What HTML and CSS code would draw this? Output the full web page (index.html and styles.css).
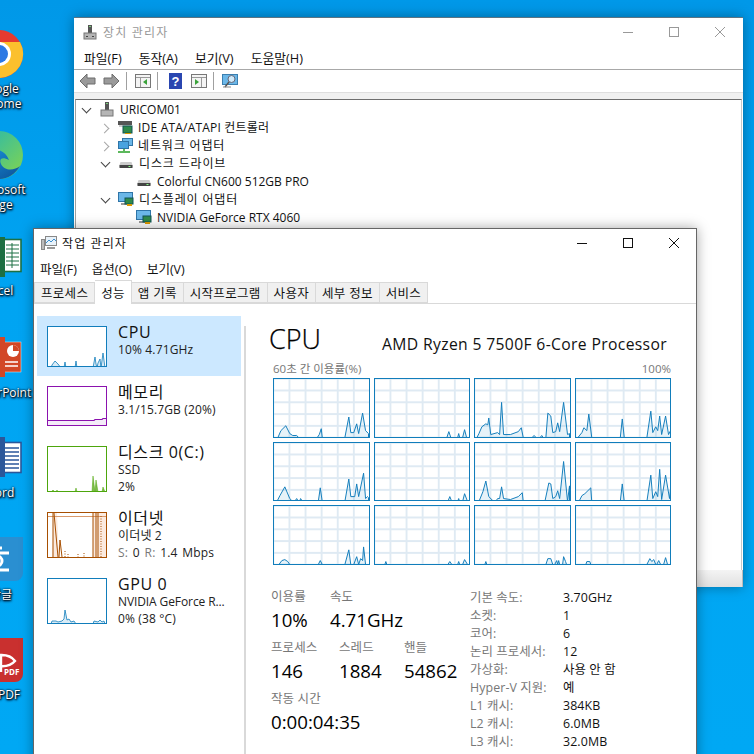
FILE: index.html
```html
<!DOCTYPE html>
<html lang="ko">
<head>
<meta charset="utf-8">
<title>작업 관리자</title>
<link rel="stylesheet" href="styles.css">
</head>
<body>
<main class="desktop">
  <div class="desk-icon di-chrome">
    <svg class="di-art" width="52" height="50" viewBox="0 0 52 50"><circle cx="26" cy="25" r="24" fill="#e53a2f"/><path d="M26 25 L5 37 A24 24 0 0 0 26 49 Z" fill="#2ea44f"/><path d="M26 25 L26 49 A24 24 0 0 0 47 13 L26 13 Z" fill="#fbc02d"/><circle cx="26" cy="25" r="12" fill="#fff"/><circle cx="26" cy="25" r="9" fill="#2b78e4"/></svg>
    <span class="di-label">Google<br>Chrome</span>
  </div>
  <div class="desk-icon di-edge">
    <svg class="di-art" width="52" height="50" viewBox="0 0 52 50"><defs><linearGradient id="edgeg" x1="0" y1="0" x2="1" y2="1"><stop offset="0" stop-color="#1fb5b8"/><stop offset="1" stop-color="#86d64a"/></linearGradient><linearGradient id="edgeb" x1="0" y1="0" x2="1" y2="1"><stop offset="0" stop-color="#1a9be0"/><stop offset="1" stop-color="#0c4f98"/></linearGradient></defs><circle cx="26" cy="25" r="24" fill="url(#edgeg)"/><path d="M2 25 C8 18 30 14 36 30 C28 26 26 30 28 34 C32 42 42 40 47 36 C42 45 34 49 26 49 C12 49 2 38 2 25 Z" fill="url(#edgeb)"/></svg>
    <span class="di-label">Microsoft<br>Edge</span>
  </div>
  <div class="desk-icon di-excel">
    <svg class="di-art" width="52" height="42" viewBox="0 0 52 42"><rect x="30" y="2.500" width="18" height="32" fill="#fff" stroke="#1d7044" stroke-width="1.600"/><path d="M33 8h13M33 12h13M33 16h13M33 20h13M33 24h13M33 28h13M39 6v25" stroke="#1d7044" fill="none"/><rect x="0" y="0" width="32" height="40" fill="#1d6f42"/></svg>
    <span class="di-label">Excel</span>
  </div>
  <div class="desk-icon di-ppt">
    <svg class="di-art" width="52" height="42" viewBox="0 0 52 42"><rect x="30" y="5" width="18" height="30" fill="#d24726" stroke="#e9e9e9" stroke-width=".5"/><circle cx="40" cy="14" r="6" fill="#fff"/><path d="M40 14v-6a6 6 0 0 1 6 6z" fill="#d24726"/><path d="M32 25h13M32 29h13" stroke="#fff" stroke-width="1.500"/><rect x="0" y="0" width="32" height="40" fill="#d24726"/></svg>
    <span class="di-label">PowerPoint</span>
  </div>
  <div class="desk-icon di-word">
    <svg class="di-art" width="52" height="42" viewBox="0 0 52 42"><rect x="30" y="5.500" width="18" height="30" fill="#fff" stroke="#2b579a" stroke-width="1.600"/><path d="M32 11h14M32 15h14M32 19h14M32 23h14M32 27h14M32 31h14" stroke="#2b579a" stroke-width="1.400"/><rect x="0" y="0" width="32" height="40" fill="#2b579a"/></svg>
    <span class="di-label">Word</span>
  </div>
  <div class="desk-icon di-hwp">
    <svg class="di-art" width="52" height="44" viewBox="0 0 52 44"><path d="M0 0H52V36a8 8 0 0 1-8 8H0Z" fill="#2a8fd1"/><path d="M22 11h9M14 16h24M26 29v4M14 33h24" stroke="#fff" stroke-width="3" fill="none"/><circle cx="26" cy="24" r="5" fill="none" stroke="#fff" stroke-width="3"/></svg>
    <span class="di-label">한글</span>
  </div>
  <div class="desk-icon di-pdf">
    <svg class="di-art" width="52" height="44" viewBox="0 0 52 44"><path d="M0 0H52V36a8 8 0 0 1-8 8H0Z" fill="#c9302f"/><path d="M16 23 C24 15 38 15 44 23 C38 30 26 30 16 23 M30 16 V34" stroke="#fff" stroke-width="2.400" fill="none"/></svg>
    <span class="di-pdf-tag">PDF</span>
    <span class="di-label">PDF</span>
  </div>

  <section class="window devmgr">
    <header class="dm-title">
      <svg class="ic" width="14" height="16" viewBox="0 0 14 16"><rect x="5" y="1" width="4" height="8" fill="#555"/><rect x="6" y="2" width="2" height="1" fill="#7c7"/><rect x="1" y="9" width="12" height="6" fill="#b5b5b5" stroke="#777"/><rect x="3" y="12" width="2" height="1" fill="#444"/><rect x="9" y="12" width="2" height="1" fill="#444"/></svg>
      <span class="dm-title-text">장치 관리자</span>
      <div class="caption dim">
        <svg width="12" height="12" viewBox="0 0 12 12"><path d="M1 6.500h10" stroke="currentColor"/></svg>
        <svg width="12" height="12" viewBox="0 0 12 12"><rect x="1.500" y="1.500" width="9" height="9" fill="none" stroke="currentColor"/></svg>
        <svg width="12" height="12" viewBox="0 0 12 12"><path d="M1 1l10 10M11 1L1 11" stroke="currentColor" fill="none"/></svg>
      </div>
    </header>
    <nav class="dm-menu"><span>파일(F)</span><span>동작(A)</span><span>보기(V)</span><span>도움말(H)</span></nav>
    <div class="dm-tools">
      <svg class="tool-back" width="17" height="16" viewBox="0 0 17 16"><path d="M1 8l7-7v4h8v6H8v4z" fill="#9a9a9a" stroke="#6c6c6c"/></svg>
      <svg width="17" height="16" viewBox="0 0 17 16"><path d="M16 8L9 1v4H1v6h8v4z" fill="#9a9a9a" stroke="#6c6c6c"/></svg>
      <i class="tsep"></i>
      <svg width="16" height="14" viewBox="0 0 16 14"><rect x=".5" y=".5" width="15" height="13" fill="#f4f4f4" stroke="#777"/><path d="M1 3.500h14M5.500 4v9" stroke="#999"/><path d="M12 5v6L8 8z" fill="#3aa23a"/></svg>
      <i class="tsep"></i>
      <svg class="tool-help" width="13" height="16" viewBox="0 0 13 16"><rect width="13" height="16" fill="#2a46b0"/><text x="6.500" y="13" class="help-q">?</text></svg>
      <svg width="16" height="14" viewBox="0 0 16 14"><rect x=".5" y=".5" width="15" height="13" fill="#f4f4f4" stroke="#777"/><path d="M1 3.500h14M10.500 4v9" stroke="#999"/><path d="M4 5v6l4-3z" fill="#3aa23a"/></svg>
      <i class="tsep"></i>
      <svg width="16" height="16" viewBox="0 0 16 16"><rect x=".5" y="1.500" width="15" height="10" fill="#6bb7e8" stroke="#3b7fb0"/><circle cx="9.500" cy="6" r="3.500" fill="#cfeafa" stroke="#667"/><path d="M7 9l-4 5" stroke="#555" stroke-width="1.500"/><path d="M1 14h8" stroke="#888"/></svg>
    </div>
    <div class="dm-strip"></div>
    <div class="dm-tree">
      <div class="row root"><span class="chev down"></span><svg width="14" height="16" viewBox="0 0 14 16"><rect x="5" y="1" width="4" height="8" fill="#555"/><rect x="6" y="2" width="2" height="1" fill="#7c7"/><rect x="1" y="9" width="12" height="6" fill="#b5b5b5" stroke="#777"/></svg><span>URICOM01</span></div>
      <div class="row l1"><span class="chev"></span><svg width="15" height="14" viewBox="0 0 15 14"><rect y="1" width="14" height="4" fill="#555"/><rect x="1" y="5" width="12" height="2" fill="#ccc"/><rect x="5" y="6" width="9" height="7" fill="#2f8a4a" stroke="#155"/><rect x="7" y="13" width="6" height="1" fill="#d90"/></svg><span class="mix">IDE ATA/ATAPI 컨트롤러</span></div>
      <div class="row l1"><span class="chev"></span><svg width="15" height="15" viewBox="0 0 15 15"><rect x="4.500" y=".5" width="10" height="7" fill="#6bb7e8" stroke="#2f75a8"/><rect x=".5" y="3.500" width="10" height="7" fill="#49a3df" stroke="#2f75a8"/><path d="M0 14h12M6 11v3" stroke="#5cb85c" stroke-width="2"/></svg><span class="kr">네트워크 어댑터</span></div>
      <div class="row l1"><span class="chev down"></span><svg width="16" height="14" viewBox="0 0 15 14"><path d="M2 6h11l1 3v2H1V9z" fill="#ccc"/><rect x="1" y="9" width="13" height="3" fill="#444"/><rect x="10" y="10" width="2" height="1" fill="#8f8"/></svg><span class="kr">디스크 드라이브</span></div>
      <div class="row l2"><svg width="16" height="14" viewBox="0 0 15 14"><path d="M2 6h11l1 3v2H1V9z" fill="#ccc"/><rect x="1" y="9" width="13" height="3" fill="#444"/><rect x="10" y="10" width="2" height="1" fill="#8f8"/></svg><span>Colorful CN600 512GB PRO</span></div>
      <div class="row l1"><span class="chev down"></span><svg width="16" height="15" viewBox="0 0 16 15"><rect x=".5" y=".5" width="14" height="9" fill="#6bb7e8" stroke="#2f75a8"/><path d="M3 12h6" stroke="#999" stroke-width="2"/><rect x="7" y="6" width="8" height="6" fill="#2f8a4a" stroke="#155"/><rect x="9" y="12" width="5" height="2" fill="#d90"/></svg><span class="kr">디스플레이 어댑터</span></div>
      <div class="row l2"><svg width="16" height="15" viewBox="0 0 16 15"><rect x=".5" y=".5" width="14" height="9" fill="#6bb7e8" stroke="#2f75a8"/><path d="M3 12h6" stroke="#999" stroke-width="2"/><rect x="7" y="6" width="8" height="6" fill="#2f8a4a" stroke="#155"/><rect x="9" y="12" width="5" height="2" fill="#d90"/></svg><span>NVIDIA GeForce RTX 4060</span></div>
    </div>
    <div class="dm-status"></div>
  </section>

  <section class="window taskmgr">
    <header class="tm-title">
      <svg width="16" height="16" viewBox="0 0 16 16"><rect x="4.500" y="1.500" width="11" height="9" fill="#e8f2fa" stroke="#888"/><path d="M5 8l3-3 2 2 3-3 2 2" stroke="#3a8fd0" fill="none"/><rect x=".5" y="4.500" width="3" height="10" fill="#bbb" stroke="#888"/><path d="M6 13h8" stroke="#999" stroke-width="2"/></svg>
      <span class="tm-title-text">작업 관리자</span>
      <div class="caption">
        <svg width="12" height="12" viewBox="0 0 12 12"><path d="M1 6.500h10" stroke="currentColor"/></svg>
        <svg width="12" height="12" viewBox="0 0 12 12"><rect x="1.500" y="1.500" width="9" height="9" fill="none" stroke="currentColor"/></svg>
        <svg width="12" height="12" viewBox="0 0 12 12"><path d="M1 1l10 10M11 1L1 11" stroke="currentColor" fill="none"/></svg>
      </div>
    </header>
    <nav class="tm-menu"><span>파일(F)</span><span>옵션(O)</span><span>보기(V)</span></nav>
    <div class="tabs">
      <span class="tab">프로세스</span><span class="tab active">성능</span><span class="tab">앱 기록</span><span class="tab">시작프로그램</span><span class="tab">사용자</span><span class="tab">세부 정보</span><span class="tab">서비스</span>
    </div>
    <div class="tm-body">
      <aside class="side">
        <div class="res selected">
          <svg class="thumb cpu" viewBox="0 0 58 39" preserveAspectRatio="none"><path class="spark-fill" d="M3 41 L4 38 L7 34 L10 37 L13 41 Z M16 41 L17 35 L18 41 Z M27 41 L28 34 L29 41 Z M45 41 L47 30 L48 37 L49 41 Z M49 41 L50 36 L52 32 L53 41 Z M53 41 L55 26 L57 41 Z"/></svg>
          <div class="res-text"><div class="res-name">CPU</div><div class="res-sub">10% 4.71GHz</div></div>
        </div>
        <div class="res mem-row">
          <svg class="thumb mem" viewBox="0 0 58 38" preserveAspectRatio="none"><path d="M0 33.500 H46 V33 H55 V32 H58 V38 H0 Z" fill="#f4ecf8"/><path d="M0 33.500 H46 L47 32.500 H54 L55 31.500 H58" stroke="#8b12ae" stroke-width="1.200" fill="none"/></svg>
          <div class="res-text"><div class="res-name">메모리</div><div class="res-sub">3.1/15.7GB (20%)</div></div>
        </div>
        <div class="res">
          <svg class="thumb disk" viewBox="0 0 58 44" preserveAspectRatio="none"><path d="M3 45 L5 43 L7 45 Z M8 45 L9 43 L10 45 Z M27 45 L28 41 L29 45 Z M44 45 L45 29 L47 45 Z M47 45 L48 33 L50 45 Z M54 45 L55 40 L57 45 Z" fill="#7cbc4a" stroke="#4ea60a" stroke-width=".5"/></svg>
          <div class="res-text"><div class="res-name">디스크 0(C:)</div><div class="res-sub">SSD</div><div class="res-sub">2%</div></div>
        </div>
        <div class="res">
          <svg class="thumb eth" viewBox="0 0 58 44" preserveAspectRatio="none"><path d="M4 44 L6 0 L9 0 L11 44 Z M45 44 V0 H58 V44 Z" fill="#fbeadf"/><path d="M0 3.500 H58" stroke="#d99a6c" stroke-width="1"/><path d="M5 44 L5 0 M10 44 L6 0 M11 44 L12 27 L14 44 M45 44 V0 M48 44 V0 M50 44 V0" stroke="#a74f01" stroke-width="1" fill="none"/><path d="M53 44 V2 M17 38 v6 M20 41 v3 M30 41 v3 M36 40 v4" stroke="#a74f01" stroke-width="1" stroke-dasharray="1 1.500" fill="none"/></svg>
          <div class="res-text"><div class="res-name">이더넷</div><div class="res-sub">이더넷 2</div><div class="res-sub wide"><span class="muted">S:</span> 0 <span class="muted">R:</span> 1.4 Mbps</div></div>
        </div>
        <div class="res">
          <svg class="thumb gpu" viewBox="0 0 58 44" preserveAspectRatio="none"><path class="spark-fill" d="M3 45 L4 42 L8 42 L10 43 L14 42 L16 40 L17 31 L19 41 L21 40 L23 43 L26 42 L28 45 Z M45 45 L46 42 L50 43 L52 41 L54 43 L56 42 L57 45 Z"/></svg>
          <div class="res-text"><div class="res-name">GPU 0</div><div class="res-sub tight">NVIDIA GeForce R...</div><div class="res-sub">0% (38 °C)</div></div>
        </div>
      </aside>
      <div class="detail">
        <div class="head"><h1>CPU</h1><div class="model">AMD Ryzen 5 7500F 6-Core Processor</div></div>
        <div class="axis"><span>60초 간 이용률(%)</span><span>100%</span></div>
        <div class="grid">
          <div class="cell"><svg viewBox="0 0 96 59" preserveAspectRatio="none"><path class="spark" d="M4 60 L7 53 12 48 16 56 19 58 23 58 25 60 Z M44 60 L46 57 48 51 49 60 Z M72 60 L76 39 78 55 81 55 84 46 86 56 90 35 93 53 96 56 V60 Z"/></svg></div>
          <div class="cell"><svg viewBox="0 0 96 59" preserveAspectRatio="none"><path class="spark" d="M73 60 L75 54 77 60 Z M84 60 L85 56 86 60 Z M89 60 L91 52 93 60 Z"/></svg></div>
          <div class="cell"><svg viewBox="0 0 96 59" preserveAspectRatio="none"><path class="spark" d="M2 60 L4 56 7 49 11 46 13 47 14 40 16 57 23 55 25 57 27 24 29 57 36 57 44 54 47 50 49 60 Z M58 60 L60 58 62 60 Z M66 60 L68 58 69 60 Z M72 60 L74 35 77 38 79 55 82 54 84 45 86 54 90 24 94 57 96 56 V60 Z"/></svg></div>
          <div class="cell"><svg viewBox="0 0 96 59" preserveAspectRatio="none"><path class="spark" d="M2 60 L6 55 8 50 11 53 13 36 16 60 Z M45 60 L47 41 49 60 Z M72 60 L76 33 78 55 81 49 83 53 85 38 87 57 91 38 94 57 96 53 V60 Z"/></svg></div>
          <div class="cell"><svg viewBox="0 0 96 59" preserveAspectRatio="none"><path class="spark" d="M3 60 L6 54 11 45 16 57 19 60 Z M21 60 L23 57 25 60 Z M26 60 L27 57 29 60 Z M45 60 L47 46 49 60 Z M72 60 L76 37 78 55 82 55 84 42 86 55 91 31 93 57 95 55 96 56 V60 Z"/></svg></div>
          <div class="cell"><svg viewBox="0 0 96 59" preserveAspectRatio="none"><path class="spark" d="M74 60 L76 55 78 60 Z M84 60 L85 57 86 60 Z M89 60 L91 52 94 60 Z"/></svg></div>
          <div class="cell"><svg viewBox="0 0 96 59" preserveAspectRatio="none"><path class="spark" d="M4 60 L8 50 11 39 14 55 19 60 Z M21 60 L23 57 25 57 27 45 29 57 36 58 44 55 48 51 49 60 Z M71 60 L75 41 77 42 79 57 82 55 84 49 86 57 90 19 94 60 96 44 V60 Z"/></svg></div>
          <div class="cell"><svg viewBox="0 0 96 59" preserveAspectRatio="none"><path class="spark" d="M3 60 L6 54 9 52 15 46 16 60 Z M45 60 L47 42 49 60 Z M72 60 L76 33 78 57 81 50 83 55 85 27 87 58 91 33 95 57 96 47 V60 Z"/></svg></div>
          <div class="cell"><svg viewBox="0 0 96 59" preserveAspectRatio="none"><path class="spark" d="M5 60 L8 56 11 55 14 57 16 60 Z M45 60 L47 56 49 60 Z M72 60 L76 45 78 60 Z M81 60 L84 52 86 60 Z M86 60 L88 54 90 56 91 42 93 60 Z"/></svg></div>
          <div class="cell"><svg viewBox="0 0 96 59" preserveAspectRatio="none"><path class="spark" d="M10 60 L11 57 12 60 Z M74 60 L76 57 78 60 Z M84 60 L85 57 86 60 Z M89 60 L91 55 94 60 Z"/></svg></div>
          <div class="cell"><svg viewBox="0 0 96 59" preserveAspectRatio="none"><path class="spark" d="M10 60 L11 57 12 60 Z M72 60 L74 54 77 54 79 60 Z M81 60 L83 56 84 60 Z M84 60 L85 56 86 60 Z M89 60 L90 52 92 57 93 60 Z"/></svg></div>
          <div class="cell"><svg viewBox="0 0 96 59" preserveAspectRatio="none"><path class="spark" d="M10 60 L11 57 14 57 15 60 Z M72 60 L75 54 77 57 79 55 81 60 Z M82 60 L84 56 86 60 Z M89 60 L91 53 93 60 Z"/></svg></div>
        </div>
        <div class="stats">
          <div class="stats-left">
            <div class="stat-row"><div class="stat w59"><div class="lbl">이용률</div><div class="val">10%</div></div><div class="stat"><div class="lbl">속도</div><div class="val">4.71GHz</div></div></div>
            <div class="stat-row"><div class="stat w68"><div class="lbl">프로세스</div><div class="val">146</div></div><div class="stat w65"><div class="lbl">스레드</div><div class="val">1884</div></div><div class="stat"><div class="lbl">핸들</div><div class="val">54862</div></div></div>
            <div class="stat-row"><div class="stat"><div class="lbl">작동 시간</div><div class="val">0:00:04:35</div></div></div>
          </div>
          <dl class="specs">
            <dt>기본 속도:</dt><dd>3.70GHz</dd>
            <dt>소켓:</dt><dd>1</dd>
            <dt>코어:</dt><dd>6</dd>
            <dt>논리 프로세서:</dt><dd>12</dd>
            <dt>가상화:</dt><dd>사용 안 함</dd>
            <dt>Hyper-V 지원:</dt><dd>예</dd>
            <dt>L1 캐시:</dt><dd>384KB</dd>
            <dt>L2 캐시:</dt><dd>6.0MB</dd>
            <dt>L3 캐시:</dt><dd>32.0MB</dd>
          </dl>
        </div>
      </div>
    </div>
  </section>
</main>
</body>
</html>
```
FILE: styles.css
```css
* { box-sizing: border-box; }
html, body { margin: 0; padding: 0; }
body {
  width: 754px;
  height: 754px;
  overflow: hidden;
  font-family: "Open Sans", "Noto Sans CJK KR", sans-serif;
  font-size: 12px;
  color: #111;
}
.desktop {
  position: relative;
  width: 754px;
  height: 754px;
  overflow: hidden;
  background: linear-gradient(180deg, #0098e8 0, #00a4f2 40%, #00a8f4 100%);
}

/* desktop icons */
.desk-icon {
  position: absolute;
  left: -39px;
  width: 76px;
  display: flex;
  flex-direction: column;
  align-items: center;
  color: #fff;
}
.di-label {
  text-align: center;
  font-size: 12px;
  line-height: 15px;
  text-shadow: 0 0 2px #000, 1px 1px 2px #000, 0 1px 3px #003;
}
.di-chrome { top: 29px; }
.di-chrome .di-label, .di-edge .di-label { margin-top: 2px; }
.di-edge { top: 130px; }
.di-excel { top: 237px; }
.di-excel .di-label { margin-top: 4px; }
.di-ppt { top: 337px; }
.di-ppt .di-label { margin-top: 6px; }
.di-word { top: 437px; }
.di-word .di-label { margin-top: 6px; }
.di-hwp { top: 537px; left: -41px; }
.di-hwp .di-label { margin-top: 6px; margin-left: 8px; }
.di-pdf { top: 638px; left: -41px; }
.di-pdf .di-label { margin-top: 5px; margin-left: 24px; }
.di-pdf-tag {
  position: absolute;
  left: 45px;
  top: 29px;
  font-size: 8px;
  line-height: 10px;
  font-weight: 700;
  color: #fff;
}

/* windows */
.window {
  position: absolute;
  background: #fff;
  display: flex;
  flex-direction: column;
  box-shadow: 0 0 12px rgba(0, 0, 0, .35);
}
.devmgr {
  left: 74px;
  top: 17px;
  width: 669px;
  height: 570px;
  border-top: 1px solid #5d7483;
}
.taskmgr {
  left: 33px;
  top: 228px;
  width: 664px;
  height: 540px;
  border-top: 1px solid #666;
  border-left: 1px solid #666;
  border-right: 1px solid #666;
}
.caption {
  margin-left: auto;
  display: flex;
  color: #111;
  gap: 34px;
  margin-right: 16px;
}
.caption.dim { color: #999; margin-right: 17px; }

/* device manager */
.dm-title {
  height: 28px;
  display: flex;
  align-items: center;
  padding: 0 0 1px 9px;
  flex: none;
}
.dm-title .ic { margin-right: 6px; }
.dm-title-text { color: #999; font-size: 12px; letter-spacing: 1.200px; }
.dm-menu {
  height: 24px;
  display: flex;
  align-items: center;
  padding-left: 10px;
  gap: 17px;
  flex: none;
  border-bottom: 1px solid #a8a8a8;
  font-size: 12.800px;
}
.dm-tools {
  height: 22px;
  flex: none;
  display: flex;
  align-items: center;
  padding-left: 5px;
  gap: 6px;
}
.dm-tools .tsep { width: 1px; height: 18px; background: #a0a0a0; margin-right: 2px; }
.dm-tools .tool-back { margin-right: 1px; }
.dm-tools .tool-help { margin: 0 3px; }
.help-q { font: 700 13px "Liberation Sans", sans-serif; fill: #fff; text-anchor: middle; }
.dm-strip {
  height: 7px;
  flex: none;
  background: #f0f0f0;
  border-top: 1px solid #dedede;
}
.dm-tree {
  flex: 1;
  margin-left: 1px;
  margin-right: 1px;
  border-top: 1px solid #6e6e6e;
  border-left: 1px solid #a0a0a0;
  border-right: 1px solid #c8c8c8;
  background: #fff;
}
.row {
  height: 18px;
  display: flex;
  align-items: center;
  gap: 5px;
  padding-left: 6px;
  white-space: nowrap;
  font-size: 12px;
}
.row.root { gap: 6px; }
.row.l1 { padding-left: 25px; }
.row.l2 { padding-left: 60px; }
.kr { letter-spacing: .85px; }
.mix { letter-spacing: .2px; }
.chev {
  width: 9px;
  height: 9px;
  flex: none;
  margin-right: 3px;
  position: relative;
}
.chev::after {
  content: "";
  position: absolute;
  left: 0;
  top: 2px;
  width: 6px;
  height: 6px;
  border-right: 1.500px solid #a6a6a6;
  border-bottom: 1.500px solid #a6a6a6;
  transform: rotate(-45deg);
}
.chev.down::after {
  top: 0;
  left: 1px;
  border-color: #444;
  transform: rotate(45deg);
}
.dm-status {
  height: 17px;
  flex: none;
  background: linear-gradient(180deg, #f4f4f4, #e0e0e0);
  border-right: 1px solid #bbb;
}

/* task manager */
.tm-title {
  height: 28px;
  flex: none;
  display: flex;
  align-items: center;
  padding-left: 7px;
}
.tm-title-text { margin-left: 5px; letter-spacing: 1.100px; color: #111; }
.tm-menu {
  height: 23px;
  display: flex;
  align-items: center;
  gap: 15px;
  padding-left: 6px;
  flex: none;
  font-size: 12.500px;
}
.tabs {
  height: 24px;
  flex: none;
  display: flex;
  align-items: flex-end;
  border-bottom: 1px solid #d9d9d9;
}
.tab {
  height: 21px;
  padding: 0 6px;
  display: flex;
  align-items: center;
  background: #f0f0f0;
  border: 1px solid #d9d9d9;
  border-left: 0;
  font-size: 12.500px;
  white-space: nowrap;
  letter-spacing: .3px;
}
.tab:first-child { border-left: 1px solid #d9d9d9; }
.tab.active {
  height: 24px;
  margin-bottom: -1px;
  background: #fff;
  border-bottom: 0;
}
.tm-body {
  flex: 1;
  display: flex;
  min-height: 0;
}
.side {
  width: 211px;
  flex: none;
  padding: 12px 0 0 3px;
  position: relative;
}
.side::after {
  content: "";
  position: absolute;
  left: 210px;
  top: 22px;
  bottom: 0;
  width: 2px;
  background: #d9d9d9;
}
.res {
  width: 204px;
  display: flex;
  align-items: flex-start;
  gap: 11px;
  padding: 10px 0 0 10px;
  height: 66px;
}
.res.selected { background: #cce8ff; height: 60px; }
.res.mem-row { height: 60px; }
.thumb {
  width: 60px;
  flex: none;
  background: #fff;
  display: block;
  border: 1px solid;
}
.thumb.cpu { height: 41px; border-color: #117dbb; }
.thumb.mem { height: 40px; border-color: #8b12ae; }
.thumb.disk { height: 46px; border-color: #4da60c; }
.thumb.eth { height: 46px; border-color: #a74f01; }
.thumb.gpu { height: 46px; border-color: #117dbb; }
.res-text { min-width: 0; }
.res-name { font-size: 16px; line-height: 19px; margin-top: -3px; letter-spacing: .6px; }
.res-sub { font-size: 12px; line-height: 16.500px; white-space: nowrap; color: #222; letter-spacing: .15px; }
.res-sub.wide { word-spacing: 1.500px; }
.res-sub.tight { letter-spacing: -.1px; }
.muted { color: #777; }
.spark-fill { fill: #d9ebf6; stroke: #117dbb; stroke-width: .8; }
.detail {
  flex: 1;
  padding: 0 25px 0 24px;
  min-width: 0;
}
.head {
  height: 50px;
  padding-top: 18px;
  display: flex;
  justify-content: space-between;
  align-items: flex-start;
}
.head h1 {
  margin: 0;
  font-size: 27px;
  line-height: 34px;
  font-weight: 300;
  color: #000;
  -webkit-text-stroke: .25px #000;
}
.model {
  font-size: 15.700px;
  line-height: 20px;
  letter-spacing: .35px;
  margin: 12px 4px 0 0;
}
.axis {
  height: 18px;
  display: flex;
  justify-content: space-between;
  align-items: center;
  padding-left: 4px;
  color: #777;
  font-size: 11.500px;
  margin-top: 5px;
}
.grid {
  margin: 1px 0 0 4px;
  display: grid;
  grid-template-columns: repeat(4, 96.500px);
  grid-template-rows: repeat(3, 59.500px);
  gap: 4px;
}
.cell {
  border: 1px solid #117dbb;
  background-color: #fff;
  background-image:
    linear-gradient(#dfeaf3 2px, transparent 2px),
    linear-gradient(90deg, #dfeaf3 2px, transparent 2px);
  background-size: 100% 11.800px, 16.100px 100%;
  background-position: 0 10.500px, 14.500px 0;
}
.cell svg { display: block; width: 100%; height: 100%; }
.spark { fill: rgba(17, 125, 187, .1); stroke: #117dbb; stroke-width: 1; }
.stats {
  margin-top: 22px;
  display: flex;
  justify-content: space-between;
}
.stats-left { padding-left: 2px; }
.stat-row { display: flex; height: 51px; }
.w59 { width: 59px; }
.w68 { width: 68px; }
.w65 { width: 65px; }
.lbl { color: #777; font-size: 12.500px; line-height: 20px; letter-spacing: .1px; }
.val { font-size: 18.700px; line-height: 26px; color: #000; }
.specs {
  margin: 2px 0 0;
  width: 201px;
  display: grid;
  grid-template-columns: 93px 1fr;
  grid-auto-rows: 18px;
  font-size: 12.400px;
  line-height: 18px;
  letter-spacing: .1px;
}
.specs dt { color: #777; margin: 0; white-space: nowrap; }
.specs dd { color: #111; margin: 0; white-space: nowrap; }
```
